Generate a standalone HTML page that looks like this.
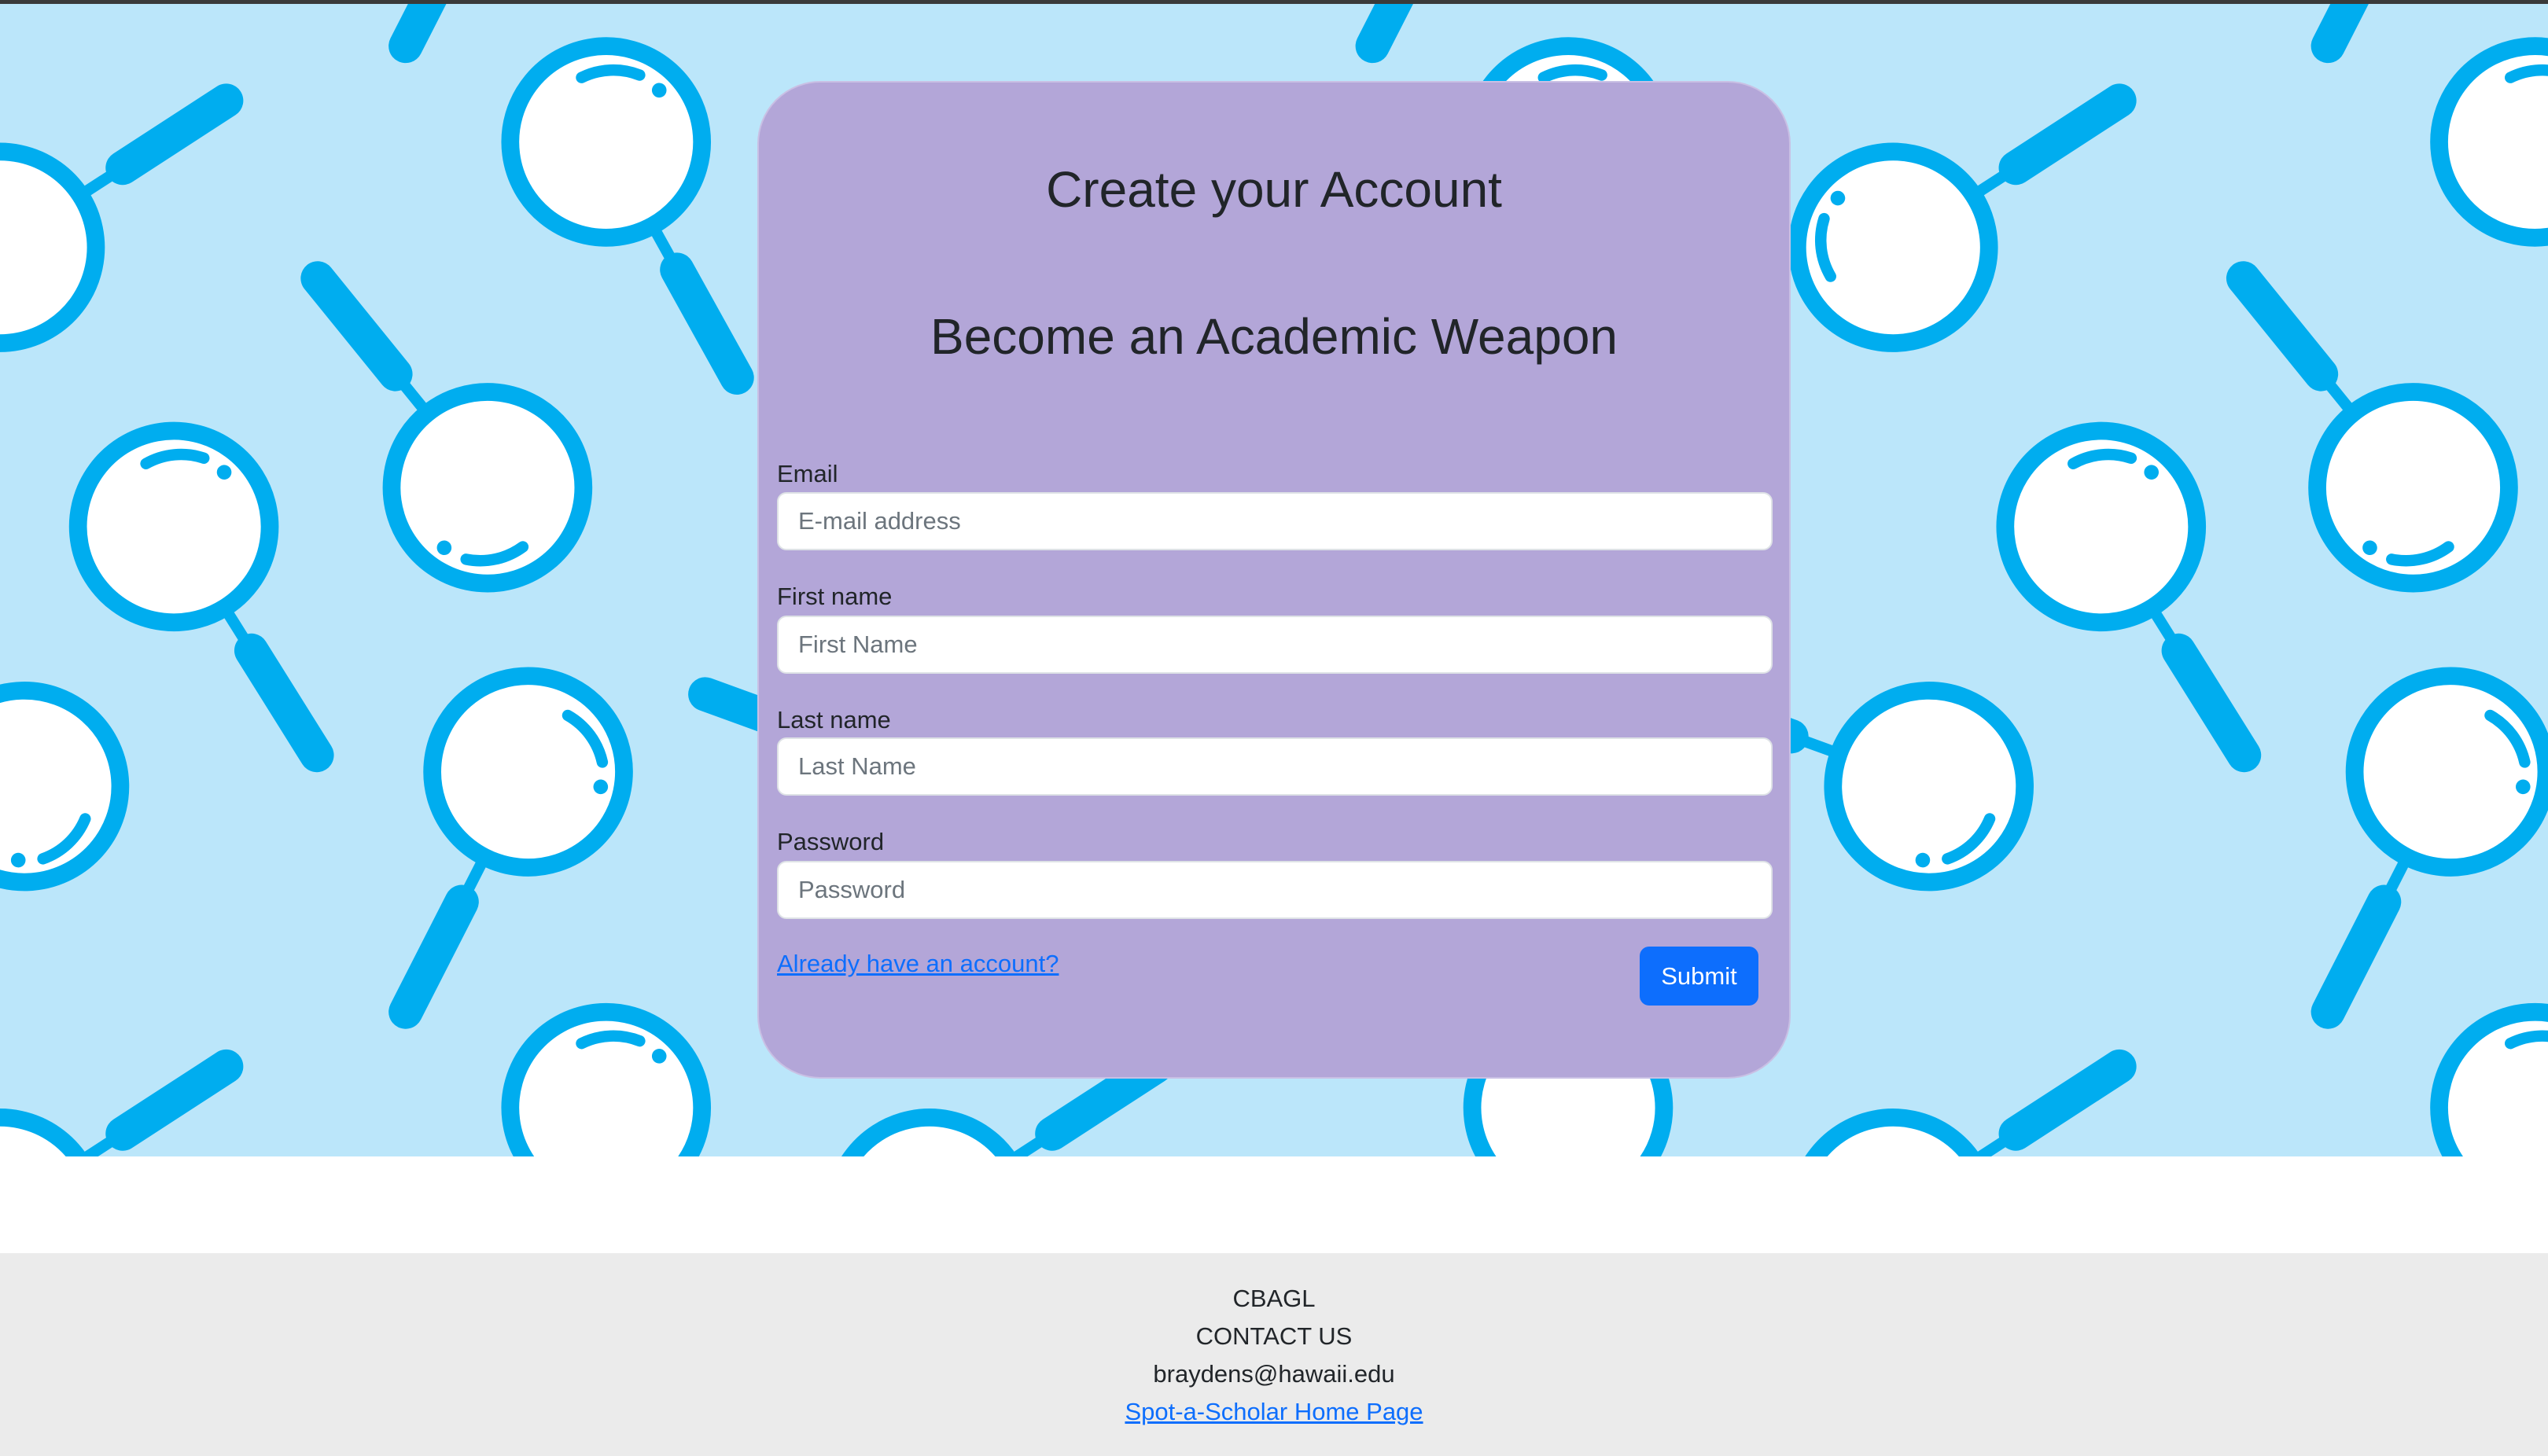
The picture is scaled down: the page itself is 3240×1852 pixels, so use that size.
<!DOCTYPE html>
<html><head><meta charset="utf-8"><style>
html,body{margin:0;padding:0;width:3240px;height:1852px;overflow:hidden;background:#fff;font-family:"Liberation Sans",sans-serif;}
.top{position:absolute;left:0;top:0;width:3240px;height:5px;background:#3a3a3a;}
.bg{position:absolute;left:0;top:5px;width:3240px;height:1466px;background:#bbe6fa;overflow:hidden}
.card{position:absolute;left:963px;top:103px;width:1314px;height:1269px;background:#b3a6d8;border-radius:80px;box-sizing:border-box;border:2px solid #c9c0e4}
h1{position:absolute;left:0;width:100%;text-align:center;margin:0;font-weight:normal;color:#212529;line-height:1.15}
.lbl{position:absolute;left:23px;font-size:31px;color:#212529}
.inp{position:absolute;left:23px;width:1266px;height:74px;background:#fff;border:2px solid #dee2e6;border-radius:12px;box-sizing:border-box;font-size:31px;color:#6c757d;line-height:70px;padding-left:25px}
.link{position:absolute;left:23px;top:1103px;font-size:31px;color:#0d6efd;text-decoration:underline}
.btn{position:absolute;left:1120px;top:1099px;width:151px;height:75px;background:#0d6efd;border-radius:12px;color:#fff;font-size:31px;text-align:center;line-height:75px}
.foot{position:absolute;left:0;top:1594px;width:3240px;height:258px;background:#ebebeb;text-align:center;font-size:31px;color:#212529}
.foot div{position:absolute;left:0;width:100%}
</style></head><body>
<div class="top"></div>
<div class="bg">
<svg width="3240" height="1466" viewBox="0 0 1568 710" preserveAspectRatio="none">
<defs>
<g id="m">
<line x1="60" y1="0" x2="84" y2="0" stroke="#00adef" stroke-width="7"/>
<line x1="90" y1="0" x2="166" y2="0" stroke="#00adef" stroke-width="21" stroke-linecap="round"/>
<circle cx="0" cy="0" r="59" fill="#fff" stroke="#00adef" stroke-width="11"/>
<path d="M-26,-38 A44,44 0 0 0 -42,-6" fill="none" stroke="#00adef" stroke-width="7" stroke-linecap="round"/>
<circle cx="-12" cy="-44" r="4.5" fill="#00adef"/>
</g>
</defs>
<use href="#m" transform="translate(0,150) rotate(-33)"/>
<use href="#m" transform="translate(0,745) rotate(-33)"/>
<use href="#m" transform="translate(373,85) rotate(61)"/>
<use href="#m" transform="translate(373,680) rotate(61)"/>
<use href="#m" transform="translate(300,298) rotate(231)"/>
<use href="#m" transform="translate(107,322) rotate(58)"/>
<use href="#m" transform="translate(325,473) rotate(117)"/>
<use href="#m" transform="translate(325,-122) rotate(117)"/>
<use href="#m" transform="translate(15,482) rotate(200)"/>
<use href="#m" transform="translate(572,745) rotate(-33)"/>
<use href="#m" transform="translate(965,85) rotate(61)"/>
<use href="#m" transform="translate(965,680) rotate(61)"/>
<use href="#m" transform="translate(920,-122) rotate(117)"/>
<use href="#m" transform="translate(590,482) rotate(200)"/>
<use href="#m" transform="translate(1165,150) rotate(-33)"/>
<use href="#m" transform="translate(1165,745) rotate(-33)"/>
<use href="#m" transform="translate(1560,85) rotate(61)"/>
<use href="#m" transform="translate(1560,680) rotate(61)"/>
<use href="#m" transform="translate(1485,298) rotate(231)"/>
<use href="#m" transform="translate(1293,322) rotate(58)"/>
<use href="#m" transform="translate(1508,473) rotate(117)"/>
<use href="#m" transform="translate(1508,-122) rotate(117)"/>
<use href="#m" transform="translate(1187,482) rotate(200)"/>
</svg>
</div>
<div class="card">
<h1 style="top:100px;font-size:64px">Create your Account</h1>
<h1 style="top:287px;font-size:64px">Become an Academic Weapon</h1>
<div class="lbl" style="top:480px">Email</div>
<div class="inp" style="top:521px">E-mail address</div>
<div class="lbl" style="top:636px">First name</div>
<div class="inp" style="top:678px">First Name</div>
<div class="lbl" style="top:793px">Last name</div>
<div class="inp" style="top:833px">Last Name</div>
<div class="lbl" style="top:948px">Password</div>
<div class="inp" style="top:990px">Password</div>
<div class="link">Already have an account?</div>
<div class="btn">Submit</div>
</div>
<div class="foot">
<div style="top:40px">CBAGL</div>
<div style="top:88px">CONTACT US</div>
<div style="top:136px">braydens@hawaii.edu</div>
<div style="top:184px"><span style="color:#0d6efd;text-decoration:underline">Spot-a-Scholar Home Page</span></div>
</div>
</body></html>
